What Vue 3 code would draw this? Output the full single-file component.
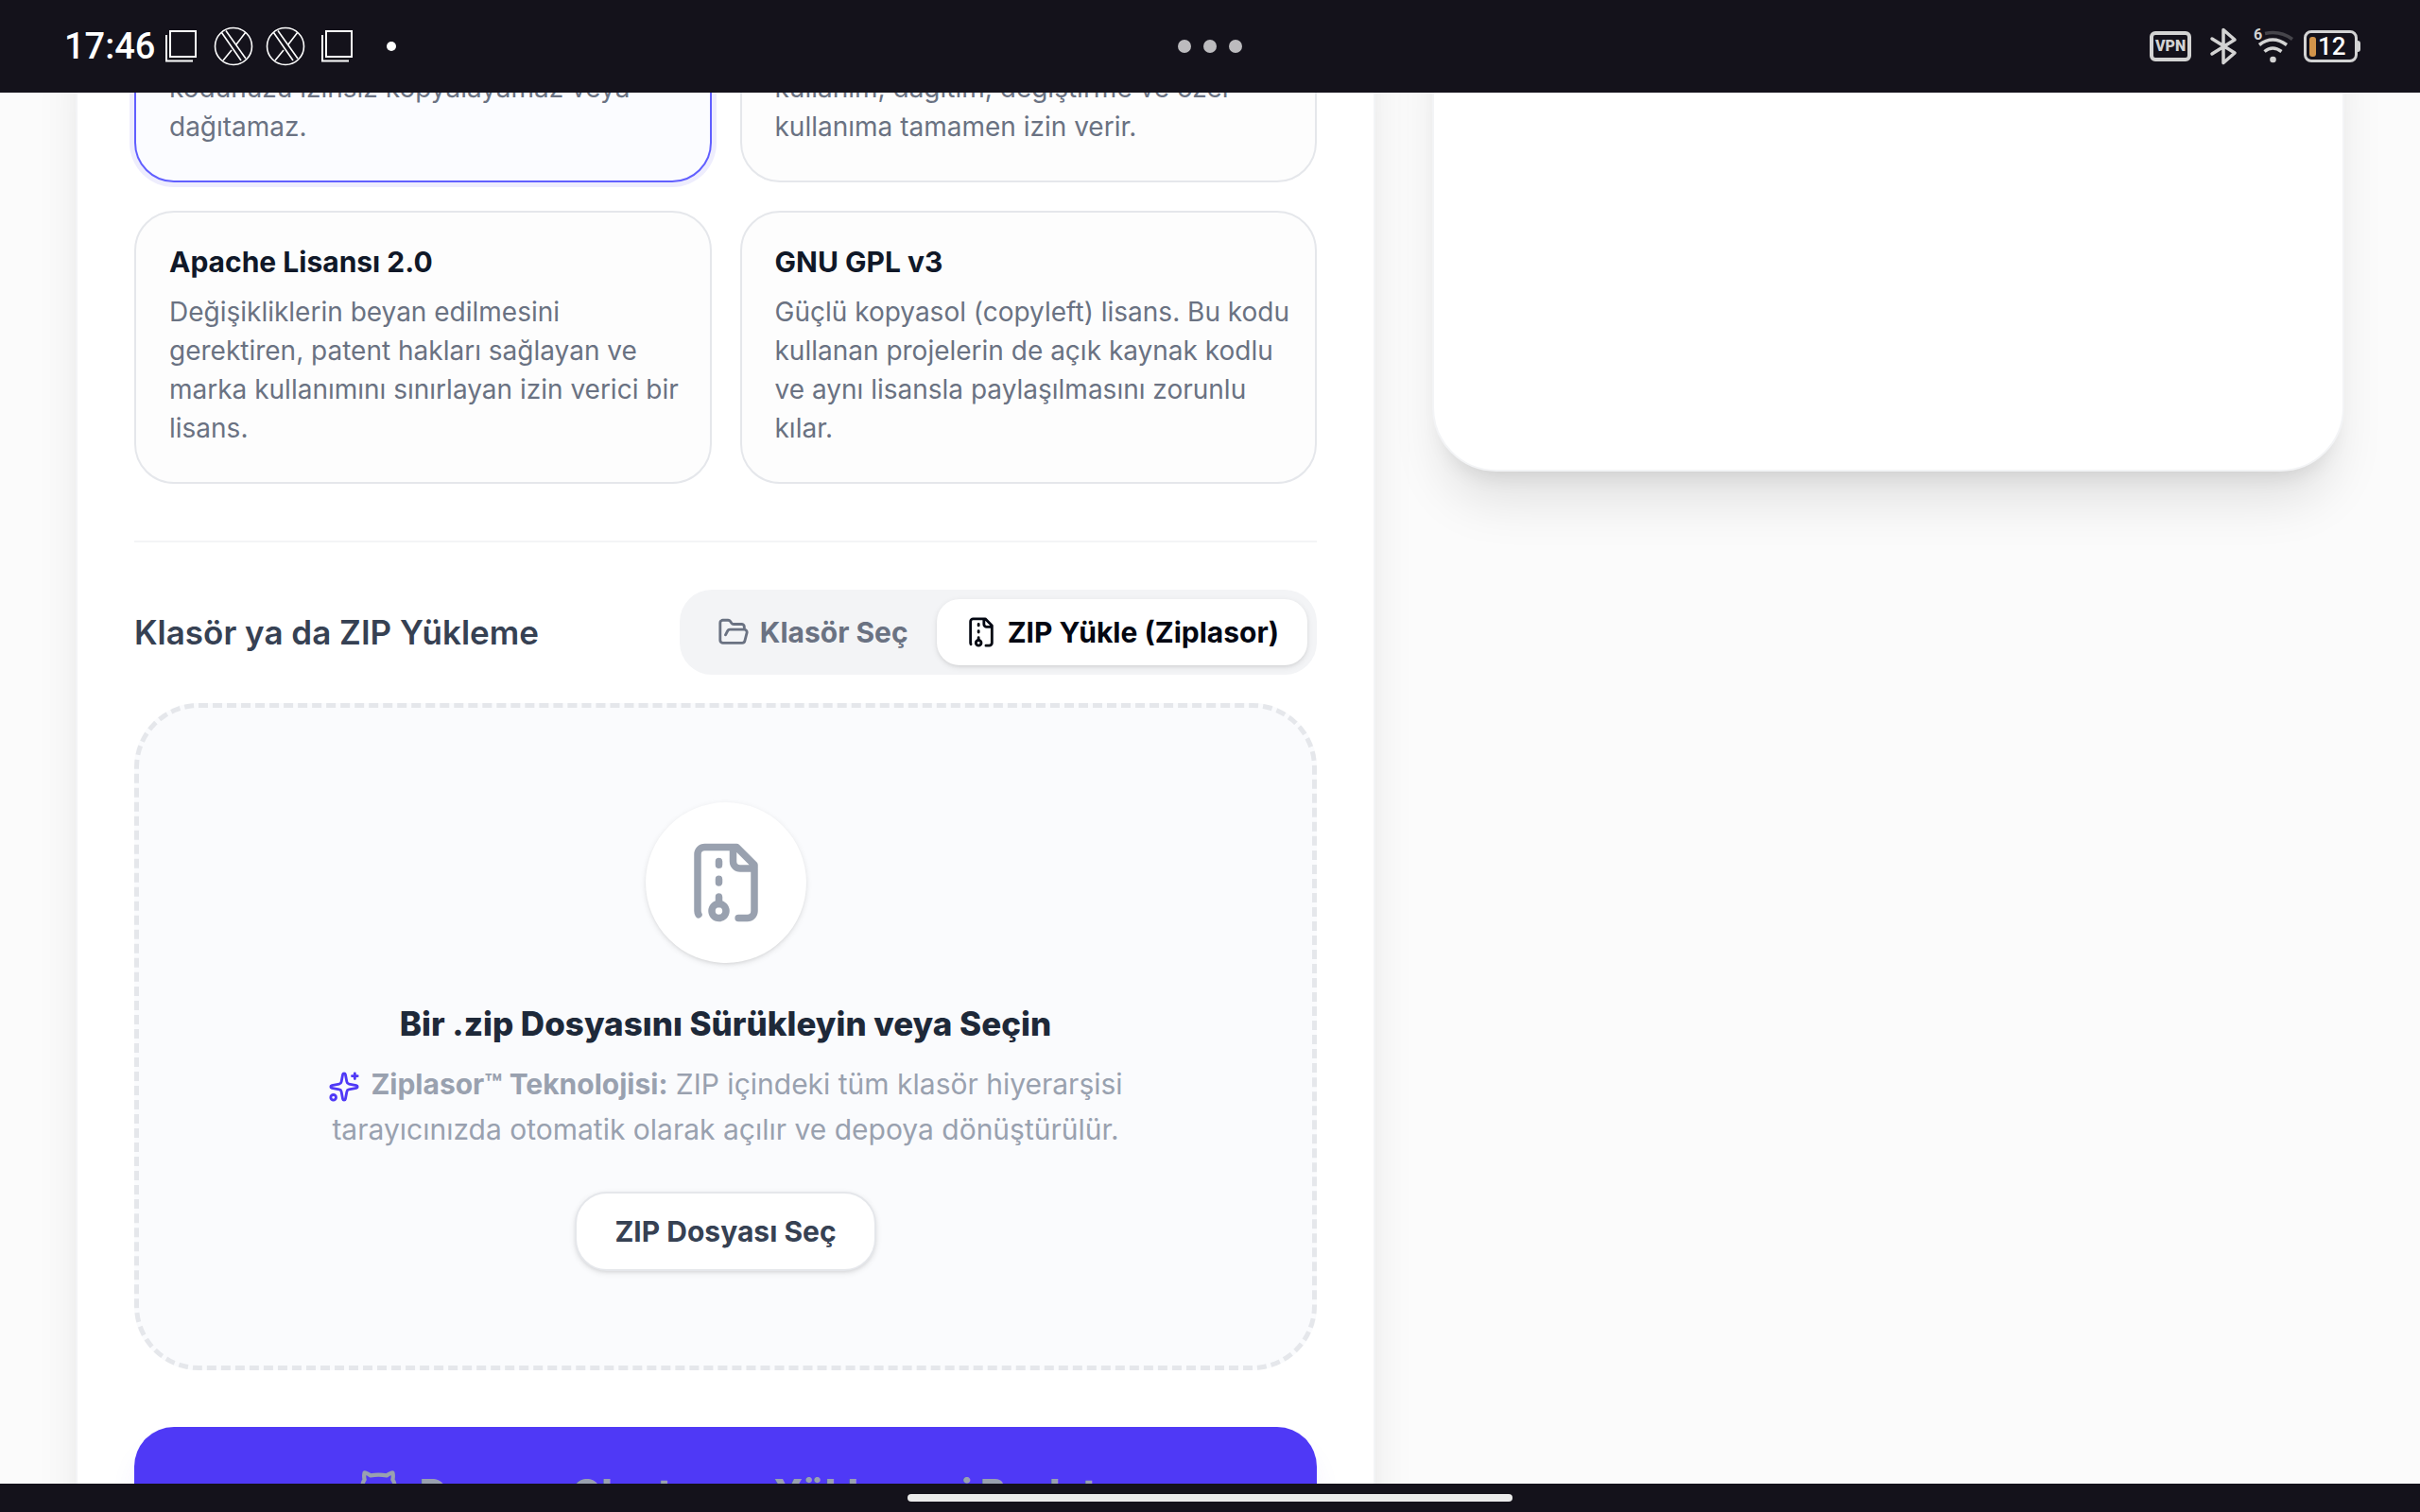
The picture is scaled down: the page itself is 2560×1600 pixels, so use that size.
<template>
  <div class="screen">
    <header class="status">
      <div class="status-side">
        <span class="clock">17:46</span>
        <template v-for="(icon, i) in notifications" :key="i">
          <svg v-if="icon === 'copy'" class="note-icon" viewBox="0 0 42 42" fill="none" stroke="#fff" stroke-width="2">
            <rect x="9" y="5" width="27" height="27" />
            <path d="M5 9v27.500h28" />
          </svg>
          <svg v-else class="note-icon" viewBox="0 0 42 42" fill="none" stroke="#fff" stroke-width="1.600">
            <circle cx="21" cy="21" r="19.500" />
            <path d="M8.500 6.500 29 36M13 4.500 34 34M34 6 24 19M10 36l9-11" />
          </svg>
        </template>
        <span class="more"></span>
      </div>
      <div class="dots"><i></i><i></i><i></i></div>
      <div class="status-side right">
        <span class="vpn">VPN</span>
        <svg class="bt" viewBox="0 0 30 40" fill="none" stroke="#d3d3d3" stroke-width="3.500" stroke-linecap="round" stroke-linejoin="round">
          <path d="M3 12 27 27 15 37.500V2.500L27 13 3 28" />
        </svg>
        <svg class="wifi" viewBox="0 0 44 40" fill="none" stroke="#d3d3d3" stroke-width="3.500">
          <path d="M13 6.500Q29 3 42 12.500" stroke="#46454b" />
          <path d="M7 18.500Q21 7.500 36 18.500" />
          <path d="M12.500 25.500Q21 18.500 30.500 25.500" />
          <circle cx="21.500" cy="34" r="3.300" fill="#d3d3d3" stroke="none" />
          <text x="1" y="13" class="wifi-gen">6</text>
        </svg>
        <span class="battery"><i class="charge"></i>12</span>
      </div>
    </header>

    <main class="viewport">
      <div class="page">
        <form class="panel form" @submit.prevent>
          <div class="licenses">
            <label
              v-for="item in licenses"
              :key="item.id"
              class="license"
              :class="{ selected: license === item.id }"
            >
              <input v-model="license" type="radio" name="license" :value="item.id" />
              <strong v-if="item.title">{{ item.title }}</strong>
              <span class="text">{{ item.text }}</span>
            </label>
          </div>

          <div class="upload-head">
            <h2>Klasör ya da ZIP Yükleme</h2>
            <div class="tabs">
              <button type="button" :class="{ active: mode === 'folder' }" @click="mode = 'folder'">
                <svg class="icon" viewBox="0 0 24 24">
                  <path d="m6 14 1.500-2.900A2 2 0 0 1 9.240 10H20a2 2 0 0 1 1.940 2.500l-1.540 6a2 2 0 0 1-1.950 1.500H4a2 2 0 0 1-2-2V5a2 2 0 0 1 2-2h3.900a2 2 0 0 1 1.690.9l.81 1.200a2 2 0 0 0 1.670.9H18a2 2 0 0 1 2 2v2" />
                </svg>
                Klasör Seç
              </button>
              <button type="button" :class="{ active: mode === 'zip' }" @click="mode = 'zip'">
                <svg class="icon" viewBox="0 0 24 24">
                  <path :d="archivePath" />
                  <circle cx="10" cy="20" r="2" />
                </svg>
                ZIP Yükle (Ziplasor)
              </button>
            </div>
          </div>

          <section class="dropzone">
            <div class="badge">
              <svg class="icon" viewBox="0 0 24 24">
                <path :d="archivePath" />
                <circle cx="10" cy="20" r="2" />
              </svg>
            </div>
            <h3>Bir .zip Dosyasını Sürükleyin veya Seçin</h3>
            <p>
              <svg class="icon sparkles" viewBox="0 0 24 24">
                <path d="M11.017 2.814a1 1 0 0 1 1.966 0l1.051 5.558a2 2 0 0 0 1.594 1.594l5.558 1.051a1 1 0 0 1 0 1.966l-5.558 1.051a2 2 0 0 0-1.594 1.594l-1.051 5.558a1 1 0 0 1-1.966 0l-1.051-5.558a2 2 0 0 0-1.594-1.594l-5.558-1.051a1 1 0 0 1 0-1.966l5.558-1.051a2 2 0 0 0 1.594-1.594z" />
                <path d="M20 2v4M22 4h-4" />
                <circle cx="4" cy="20" r="2" />
              </svg>
              <b>Ziplasor™ Teknolojisi:</b> ZIP içindeki tüm klasör hiyerarşisi
              tarayıcınızda otomatik olarak açılır ve depoya dönüştürülür.
            </p>
            <button type="button" class="pick">ZIP Dosyası Seç</button>
          </section>

          <button type="submit" class="submit" disabled>
            <svg class="icon" viewBox="0 0 24 24">
              <path d="M15 22v-4a4.800 4.800 0 0 0-1-3.500c3 0 6-2 6-5.500.08-1.250-.27-2.480-1-3.500.28-1.150.28-2.350 0-3.500 0 0-1 0-3 1.500-2.640-.5-5.360-.5-8 0C6 2 5 2 5 2c-.3 1.150-.3 2.350 0 3.500A5.403 5.403 0 0 0 4 9c0 3.500 3 5.500 6 5.500-.39.490-.68 1.050-.85 1.650-.17.6-.22 1.230-.15 1.850v4" />
              <path d="M9 18c-4.510 2-5-2-7-2" />
            </svg>
            Depoyu Oluştur ve Yüklemeyi Başlat
          </button>
        </form>

        <aside class="panel preview"></aside>
      </div>
    </main>

    <footer class="nav"><span class="pill"></span></footer>
  </div>
</template>

<script setup>
import { ref } from 'vue'

const license = ref('private')
const mode = ref('zip')

const notifications = ['copy', 'x', 'x', 'copy']

const licenses = [
  { id: 'private', text: 'kodunuzu izinsiz kopyalayamaz veya dağıtamaz.' },
  { id: 'mit', text: 'kullanım, dağıtım, değiştirme ve özel kullanıma tamamen izin verir.' },
  {
    id: 'apache',
    title: 'Apache Lisansı 2.0',
    text: 'Değişikliklerin beyan edilmesini gerektiren, patent hakları sağlayan ve marka kullanımını sınırlayan izin verici bir lisans.'
  },
  {
    id: 'gpl',
    title: 'GNU GPL v3',
    text: 'Güçlü kopyasol (copyleft) lisans. Bu kodu kullanan projelerin de açık kaynak kodlu ve aynı lisansla paylaşılmasını zorunlu kılar.'
  }
]

const archivePath =
  'M10 12v-1M10 18v-2M10 7V6M14 2v4a2 2 0 0 0 2 2h4' +
  'M15.5 22H18a2 2 0 0 0 2-2V7l-5-5H6a2 2 0 0 0-2 2v16a2 2 0 0 0 .274 1.01'
</script>

<style>
body {
  margin: 0;
  background: #fbfbfb;
}
</style>

<style scoped>
* {
  box-sizing: border-box;
}
.screen {
  height: 100vh;
  display: flex;
  flex-direction: column;
  overflow: hidden;
  font-family: Inter, "Noto Sans", sans-serif;
  color: #101828;
}
button {
  font: inherit;
  border: 0;
  cursor: pointer;
}
.icon {
  width: 34px;
  height: 34px;
  fill: none;
  stroke: currentColor;
  stroke-width: 2;
  stroke-linecap: round;
  stroke-linejoin: round;
}

/* status bar */
.status {
  flex: none;
  height: 98px;
  padding: 0 66px;
  display: grid;
  grid-template-columns: 1fr auto 1fr;
  align-items: center;
  background: #14121b;
  color: #fff;
  font-family: Roboto, sans-serif;
}
.status-side {
  display: flex;
  align-items: center;
  gap: 13px;
}
.right {
  justify-content: flex-end;
}
.clock {
  font-size: 38px;
  font-weight: 500;
  line-height: 48px;
  margin: 0 -6px 0 2px;
}
.note-icon {
  width: 42px;
  height: 42px;
}
.more {
  width: 10px;
  height: 10px;
  margin-left: 18px;
  border-radius: 50%;
  background: #fff;
}
.dots {
  display: flex;
  gap: 13px;
}
.dots i {
  width: 14px;
  height: 14px;
  border-radius: 50%;
  background: #bcbbbe;
}
.vpn {
  width: 44px;
  height: 32px;
  margin-right: 6px;
  border: 4px solid #d3d3d3;
  border-radius: 6px;
  color: #d3d3d3;
  font-size: 16px;
  font-weight: 900;
  line-height: 24px;
  display: flex;
  justify-content: center;
}
.bt {
  width: 30px;
  height: 40px;
}
.wifi {
  width: 44px;
  height: 40px;
  margin: 0 -3px 0 3px;
  overflow: visible;
}
.wifi-gen {
  font-size: 16px;
  font-weight: 700;
  fill: #d3d3d3;
  stroke: none;
}
.battery {
  position: relative;
  width: 57px;
  height: 34px;
  padding-left: 3px;
  display: flex;
  align-items: center;
  gap: 2px;
  border: 3px solid #d3d3d3;
  border-radius: 8px;
  font-size: 26px;
  font-weight: 500;
}
.battery::after {
  content: "";
  position: absolute;
  right: -6px;
  width: 3px;
  height: 12px;
  border-radius: 0 3px 3px 0;
  background: #d3d3d3;
}
.charge {
  width: 7px;
  height: 21px;
  border-radius: 3px;
  background: #d2944a;
}

/* page, scrolled part of the way down */
.viewport {
  flex: 1;
  min-height: 0;
  overflow: hidden;
}
.page {
  margin-top: -123px;
  padding: 0 80px;
  display: grid;
  grid-template-columns: repeat(12, minmax(0, 1fr));
  gap: 60px;
  align-items: start;
}
.panel {
  background: #fff;
  border: 2px solid #f3f4f6;
  border-radius: 68px;
  box-shadow: 0 42px 53px -10px rgba(0, 0, 0, .1), 0 17px 21px -13px rgba(0, 0, 0, .1);
}
.form {
  grid-column: span 7;
  padding: 60px;
}
.preview {
  grid-column: span 5;
  height: 524px;
}
.licenses {
  display: grid;
  grid-template-columns: 1fr 1fr;
  gap: 30px;
  padding-bottom: 60px;
  border-bottom: 2px solid #f3f4f6;
}
.license {
  padding: 34px 24px 36px 35px;
  border: 2px solid #e5e7eb;
  border-radius: 42px;
  background: #fdfdfd;
  cursor: pointer;
}
.license.selected {
  border-color: #615fff;
  background: #fbfcff;
  box-shadow: 0 0 0 5px #eeedfd;
}
.license input {
  position: absolute;
  opacity: 0;
}
.license strong {
  display: block;
  margin-bottom: 15px;
  font-size: 30px;
  font-weight: 700;
  line-height: 36px;
}
.text {
  display: block;
  font-size: 28px;
  line-height: 41px;
  color: #6a7282;
}
.upload-head {
  display: flex;
  align-items: center;
  justify-content: space-between;
  margin: 50px 0 30px;
}
h2 {
  margin: 0;
  font-size: 35px;
  font-weight: 600;
  color: #364153;
}
.tabs {
  display: flex;
  padding: 10px;
  border-radius: 34px;
  background: #f3f4f6;
}
.tabs button {
  display: flex;
  align-items: center;
  gap: 11px;
  height: 70px;
  padding: 0 30px;
  border-radius: 24px;
  background: none;
  font-size: 30px;
  font-weight: 700;
  color: #6a7282;
}
.tabs button.active {
  background: #fff;
  color: #030712;
  box-shadow: 0 2px 6px rgba(0, 0, 0, .1), 0 2px 4px -2px rgba(0, 0, 0, .1);
}

.dropzone {
  display: flex;
  flex-direction: column;
  align-items: center;
  padding: 100px;
  border: 5px dashed #e5e7eb;
  border-radius: 68px;
  background: #fafbfd;
  text-align: center;
}
.badge {
  width: 170px;
  height: 170px;
  display: flex;
  align-items: center;
  justify-content: center;
  border-radius: 50%;
  background: #fff;
  color: #99a1af;
  box-shadow: 0 2px 6px rgba(0, 0, 0, .1), 0 2px 4px -2px rgba(0, 0, 0, .1);
}
.badge .icon {
  width: 90px;
  height: 90px;
}
h3 {
  margin: 38px 0 14px;
  font-size: 35px;
  font-weight: 800;
  line-height: 52px;
  color: #1e2939;
}
.dropzone p {
  max-width: 870px;
  margin: 0 0 42px;
  font-size: 30px;
  line-height: 48px;
  color: #99a1af;
}
.sparkles {
  margin-right: 11px;
  vertical-align: middle;
  color: #4f39f6;
}
.pick {
  height: 84px;
  padding: 0 40px;
  border: 2px solid #e5e7eb;
  border-radius: 34px;
  background: #fff;
  font-size: 30px;
  font-weight: 700;
  color: #364153;
  box-shadow: 0 2px 6px rgba(0, 0, 0, .1), 0 2px 4px -2px rgba(0, 0, 0, .1);
}
.submit {
  width: 100%;
  height: 138px;
  margin-top: 60px;
  display: flex;
  align-items: center;
  justify-content: center;
  gap: 18px;
  border-radius: 42px;
  background: #4f39f6;
  font-size: 40px;
  font-weight: 800;
  color: #99a1af;
  box-shadow: 0 21px 32px -6px rgba(79, 57, 246, .1);
}
.submit .icon {
  width: 51px;
  height: 51px;
}

/* gesture bar */
.nav {
  flex: none;
  height: 30px;
  display: flex;
  align-items: center;
  justify-content: center;
  background: #14121b;
}
.pill {
  width: 25%;
  height: 8px;
  border-radius: 4px;
  background: #ebebeb;
}
</style>
